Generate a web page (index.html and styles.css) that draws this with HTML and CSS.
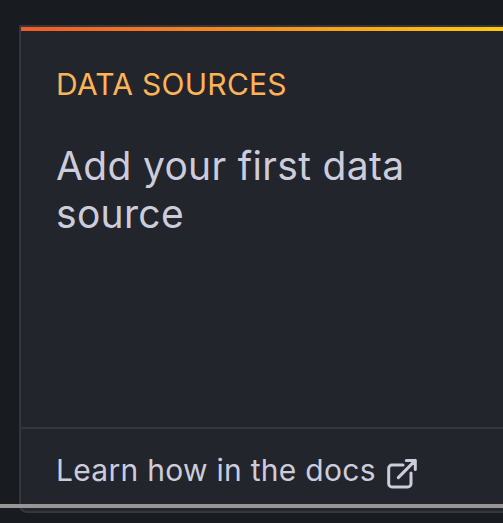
FILE: index.html
```html
<!DOCTYPE html>
<html lang="en">
<head>
<meta charset="utf-8">
<title>Data sources</title>
<link rel="stylesheet" href="styles.css">
</head>
<body>
<article class="card">
  <div class="accent"></div>
  <div class="content">
    <div class="label">DATA SOURCES</div>
    <h2 class="title">Add your first data source</h2>
  </div>
  <a class="docs">
    <span>Learn how in the docs</span>
    <svg class="icon" viewBox="0 0 32 32"><path d="M17 8H6a3.3 3.3 0 0 0-3.3 3.3v15.4A3.3 3.3 0 0 0 6 30h15.7a3.3 3.3 0 0 0 3.3-3.3V16M20.3 3.4h9v9M29.3 3.4 12.3 20.6"/></svg>
  </a>
</article>
<div class="scrollbar"></div>
</body>
</html>
```
FILE: styles.css
```css
* { box-sizing: border-box; }
body {
  margin: 0;
  height: 523px;
  overflow: hidden;
  background: #181b1f;
  font-family: Inter, "Liberation Sans", sans-serif;
  color: #ccccdc;
}
.card {
  height: 488px;
  margin: 25px 0 0 19px;
  border: 2px solid #34363d;
  border-right: 0;
  border-radius: 2px 0 0 8px;
  background: #22252b;
  display: flex;
  flex-direction: column;
}
.accent { height: 4px; background: linear-gradient(90deg, #f55f3e -5%, #f05a28 0, #ffc911 100%); }
.content { flex: 1; padding: 33px 35px 0; }
.label { font-size: 30px; line-height: 40px; letter-spacing: .26px; color: #ffb357; white-space: nowrap; }
.title { margin: 38px 0 0; width: 380px; font-size: 39px; line-height: 48px; font-weight: 400; letter-spacing: .32px; }
.docs {
  height: 84px;
  border-top: 2px solid #34363d;
  padding: 21px 35px 0;
  display: flex;
  gap: 10px;
  font-size: 30px;
  line-height: 40px;
  letter-spacing: .28px;
  white-space: nowrap;
}
.icon { flex: none; width: 32px; height: 32px; margin-top: 7px; fill: none; stroke: currentColor; stroke-width: 3; stroke-linecap: round; stroke-linejoin: round; }
.scrollbar { position: absolute; left: 0; right: 0; top: 504px; height: 4px; background: #979595; }
```
